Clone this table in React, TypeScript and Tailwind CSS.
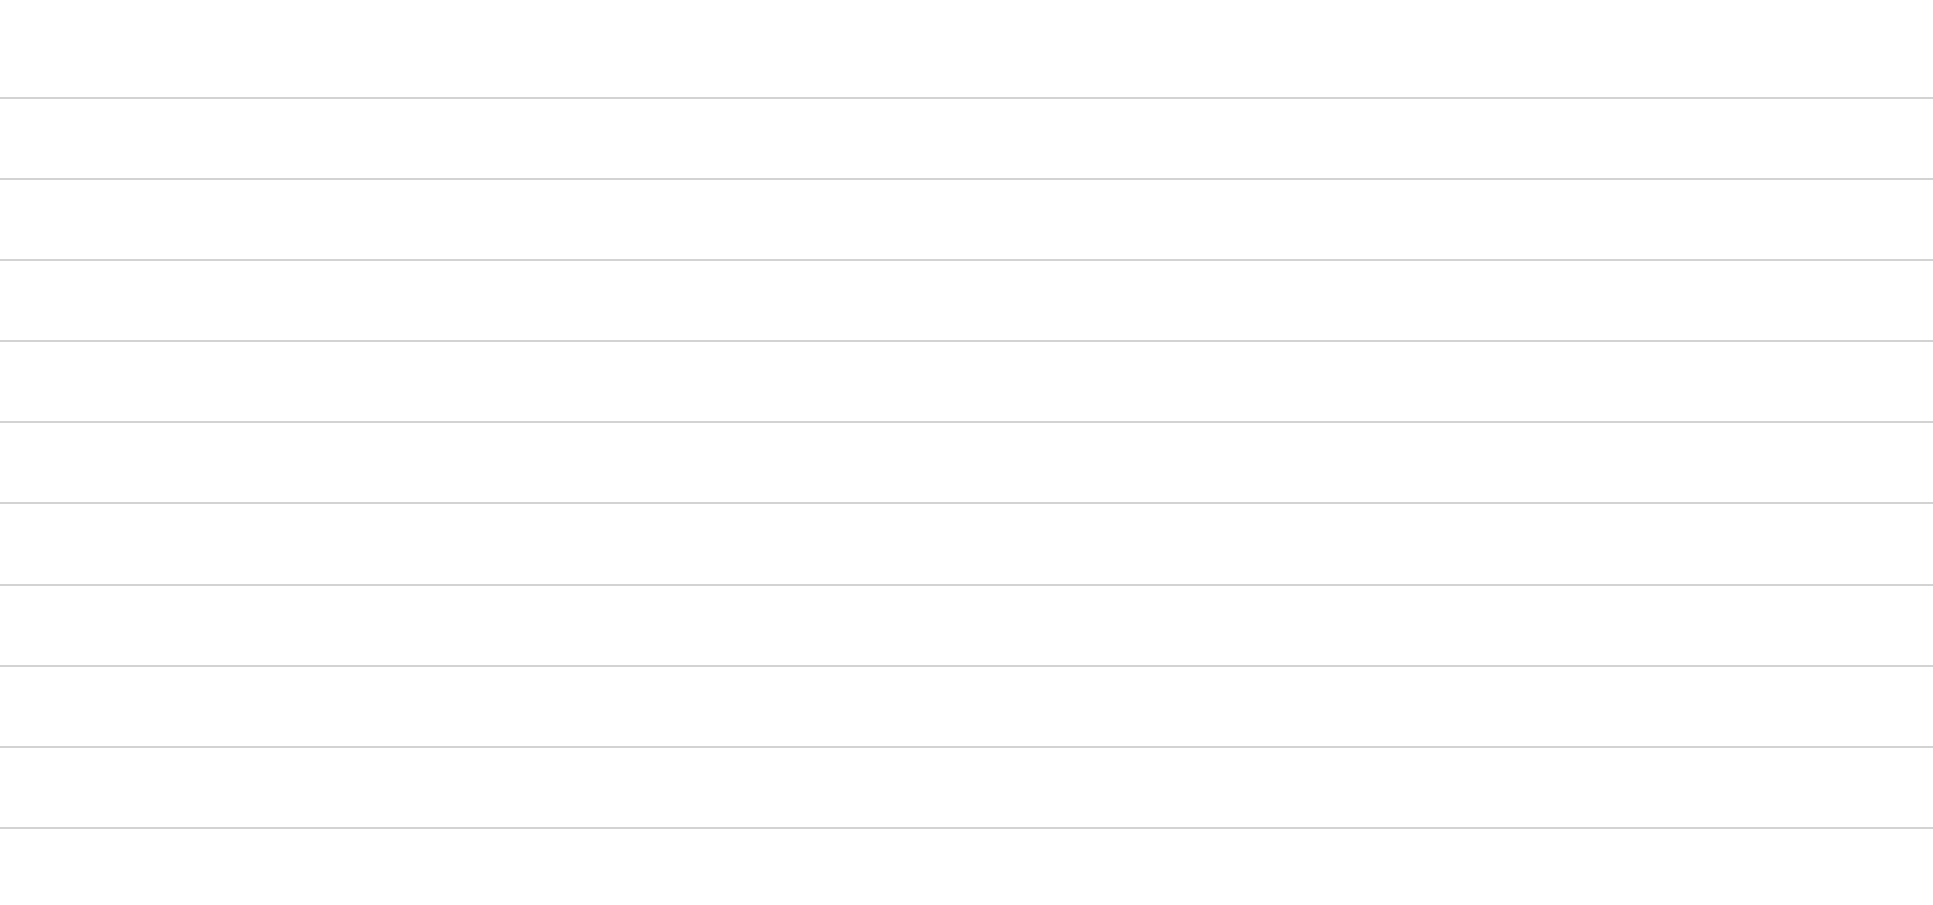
export default function App() {
  const rows = Array.from({ length: 10 });
  return (
    <div className="w-full h-[905px] bg-white overflow-hidden flex flex-col">
      <div className="h-[97px] shrink-0" />
      {rows.map((_, i) => (
        <div key={i} className="h-[81.1px] shrink-0 border-t-2 border-[#d3d3d3]" />
      ))}
    </div>
  );
}
